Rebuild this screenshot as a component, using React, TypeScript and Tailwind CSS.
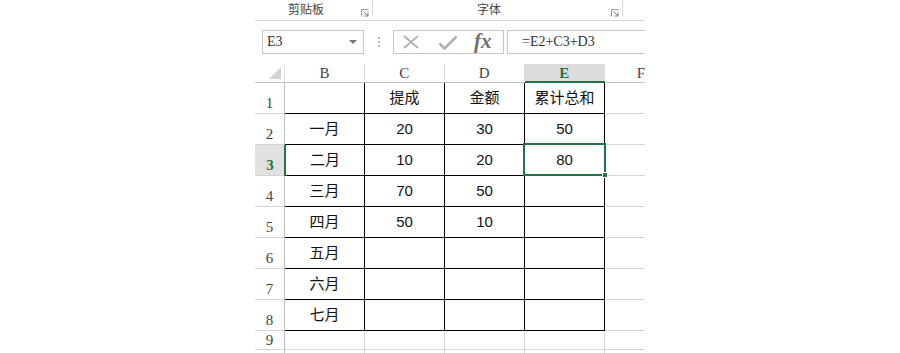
import React from "react";

const rows: string[][] = [
  ["", "提成", "金额", "累计总和"],
  ["一月", "20", "30", "50"],
  ["二月", "10", "20", "80"],
  ["三月", "70", "50", ""],
  ["四月", "50", "10", ""],
  ["五月", "", "", ""],
  ["六月", "", "", ""],
  ["七月", "", "", ""],
];

const serif = { fontFamily: '"Liberation Serif", "Noto Sans CJK SC", serif' };
const cellFont = { fontFamily: '"Liberation Sans", "Noto Sans CJK SC", sans-serif' };
const uiFont = { fontFamily: '"Noto Sans CJK SC", "Noto Sans", sans-serif' };

function Launcher() {
  return (
    <svg width="8" height="8" viewBox="0 0 8 8" className="block">
      <path d="M0.5 7.5V0.5H7.5" fill="none" stroke="#9a9a9a" strokeWidth="1" />
      <path d="M2.5 2.5L6.5 6.5" fill="none" stroke="#7a7a7a" strokeWidth="1" />
      <path d="M7 3.5V7H3.5" fill="none" stroke="#7a7a7a" strokeWidth="1" />
    </svg>
  );
}

export default function App() {
  return (
    <div className="w-[900px] h-[353px] bg-white flex justify-center overflow-hidden">
      <div className="w-[390px] h-[353px] flex flex-col overflow-hidden">
        {/* Ribbon group labels */}
        <div className="h-[21px] shrink-0 border-b border-[#d6d6d6] flex items-start" style={uiFont}>
          <div className="w-[117px] h-[17px] flex items-center">
            <span className="ml-[33px] text-[12px] leading-none text-[#444]">剪贴板</span>
            <span className="ml-auto mr-[3px] mt-[8px]"><Launcher /></span>
          </div>
          <div className="w-px h-[16px] bg-[#dadada]" />
          <div className="w-[249px] h-[17px] flex items-center">
            <span className="ml-[104px] text-[12px] leading-none text-[#444]">字体</span>
            <span className="ml-auto mr-[3px] mt-[8px]"><Launcher /></span>
          </div>
          <div className="w-px h-[16px] bg-[#dadada]" />
        </div>

        {/* Formula bar */}
        <div className="mt-[9px] h-[24px] shrink-0 flex items-stretch">
          <div className="ml-[7px] w-[102px] border border-[#c6c6c6] flex items-center pl-[4px] pr-[6px]">
            <span className="text-[14px] leading-none text-[#333]" style={serif}>E3</span>
            <span className="ml-auto w-0 h-0 border-l-[4px] border-r-[4px] border-t-[4px] border-l-transparent border-r-transparent border-t-[#777]" />
          </div>
          <div className="w-[29px] flex flex-col items-center justify-center gap-[2px]">
            <span className="w-[2px] h-[2px] bg-[#b5b5b5]" />
            <span className="w-[2px] h-[2px] bg-[#b5b5b5]" />
            <span className="w-[2px] h-[2px] bg-[#b5b5b5]" />
          </div>
          <div className="w-[111px] border border-[#c6c6c6] flex items-center">
            <svg width="16" height="14" viewBox="0 0 16 14" className="ml-[9px]">
              <path d="M1 1L15 13M15 1L1 13" stroke="#b0b0b0" strokeWidth="1.8" fill="none" />
            </svg>
            <svg width="20" height="15" viewBox="0 0 20 15" className="ml-[19px]">
              <path d="M1.5 8.5L6.5 13.5L18.5 1.5" stroke="#b0b0b0" strokeWidth="2.6" fill="none" />
            </svg>
            <span className="ml-[16px] text-[21px] leading-none italic font-bold text-[#707070] -mt-[2px]" style={serif}>fx</span>
          </div>
          <div className="ml-[3px] flex-1 border border-r-0 border-[#c6c6c6] flex items-center pl-[14px]">
            <span className="text-[14px] leading-none text-[#333]" style={serif}>=E2+C3+D3</span>
          </div>
        </div>

        {/* Sheet */}
        <div className="mt-[10px] relative flex-1 flex flex-col">
          {/* Column headers */}
          <div className="h-[19px] shrink-0 flex border-b border-[#c2c2c2]" style={serif}>
            <div className="w-[30px] border-r border-[#dadada] relative">
              <svg width="13" height="13" viewBox="0 0 13 13" className="absolute right-[2px] bottom-[2px]">
                <path d="M12 0V12H0Z" fill="#d2d2d2" />
              </svg>
            </div>
            {["B", "C", "D", "E"].map((c) => (
              <div
                key={c}
                className={
                  c === "E"
                    ? "w-[80px] border-r border-[#dadada] bg-[#dcdcdc] flex items-center justify-center text-[15px] font-bold text-[#217346] relative"
                    : "w-[80px] border-r border-[#dadada] flex items-center justify-center text-[15px] text-[#444]"
                }
              >
                {c}
                {c === "E" && <span className="absolute left-0 right-[-1px] bottom-[-1px] h-[2px] bg-[#217346]" />}
              </div>
            ))}
            <div className="flex-1 flex items-center pl-[32px] text-[15px] text-[#444]">F</div>
          </div>

          {/* Data rows */}
          {rows.map((r, i) => {
            const sel = i === 2;
            return (
              <div key={i} className="h-[31px] shrink-0 flex">
                <div
                  className={
                    sel
                      ? "w-[30px] border-b border-[#d4d4d4] bg-[#e1e1e1] relative flex items-end justify-center pb-[2px] text-[15px] leading-none font-bold text-[#217346]"
                      : "w-[30px] border-b border-[#d4d4d4] border-r border-r-[#bdbdbd] flex items-end justify-center pb-[2px] text-[15px] leading-none text-[#444]"
                  }
                  style={serif}
                >
                  {i + 1}
                  {sel && <span className="absolute right-[-1px] top-0 bottom-[-1px] w-[2px] bg-[#217346]" />}
                </div>
                {r.map((v, j) => (
                  <div
                    key={j}
                    className={
                      (j === 0 && sel ? "w-[80px] ml-[1px] " : "w-[80px] ") +
                      "border-r border-b border-black flex items-center justify-center text-[15px] text-[#111]"
                    }
                    style={j === 0 && sel ? { ...cellFont, width: 79 } : cellFont}
                  >
                    {v}
                  </div>
                ))}
                <div className="flex-1 border-b border-[#d4d4d4]" />
              </div>
            );
          })}

          {/* Row 9 and beyond */}
          {[9, 10].map((n) => (
            <div key={n} className="h-[19px] shrink-0 flex">
              <div
                className="w-[30px] border-b border-r border-[#d4d4d4] border-r-[#bdbdbd] flex items-end justify-center pb-[1px] text-[15px] leading-none text-[#444]"
                style={serif}
              >
                {n === 9 ? n : ""}
              </div>
              {[0, 1, 2, 3].map((j) => (
                <div key={j} className="w-[80px] border-r border-b border-[#dadada]" />
              ))}
              <div className="flex-1 border-b border-[#d4d4d4]" />
            </div>
          ))}

          {/* Active cell outline */}
          <div className="absolute left-[268px] top-[79px] w-[83px] h-[33px] border-2 border-[#217346] pointer-events-none">
            <span className="absolute right-[-4px] bottom-[-4px] w-[6px] h-[6px] bg-[#217346] border border-white" />
          </div>
        </div>
      </div>
    </div>
  );
}
